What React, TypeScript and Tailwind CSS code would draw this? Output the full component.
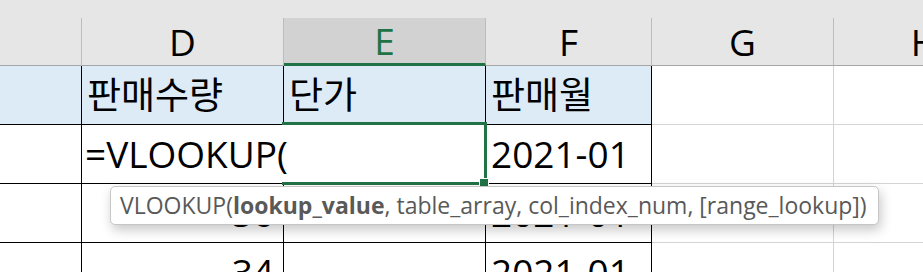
import clsx from "clsx";
import type { ReactNode } from "react";

const font = "font-['Open_Sans','Noto_Sans_CJK_KR',sans-serif]";

const widths = [
  "w-[82px]",
  "w-[202px]",
  "w-[202px]",
  "w-[166px]",
  "w-[182px]",
  "w-[182px]",
];
const letters = ["", "D", "E", "F", "G", "H"];

type CellProps = {
  col: number;
  blue?: boolean;
  right?: boolean;
  noRight?: boolean;
  children?: ReactNode;
};

// body cell: columns C..F carry the table's black borders, G/H only gridlines
const Cell = ({ col, blue, right, noRight, children }: CellProps) => (
  <div
    className={clsx(
      "h-[59px] shrink-0 border-b border-r pt-[10px] leading-[37px] whitespace-nowrap text-[37px] text-black",
      widths[col],
      col >= 4 ? "border-[#d4d4d4]" : "border-black",
      blue && "bg-[#ddebf7]",
      noRight && "border-r-transparent",
      right ? "text-right pr-[9px]" : "pl-[5px]"
    )}
  >
    {children}
  </div>
);

const App = () => {
  return (
    <div
      className={clsx(
        "relative w-[923px] h-[272px] overflow-hidden bg-white",
        font
      )}
    >
      <div className="h-[18px] w-[1100px] bg-[#e6e6e6]" />

      {/* column headers */}
      <div className="flex w-[1100px]">
        {letters.map((l, i) => (
          <div
            key={i}
            className={clsx(
              "h-[48px] shrink-0 flex items-center justify-center border-r border-[#bcbcbc] text-[37px] leading-none",
              widths[i],
              i === 2
                ? "bg-[#d2d2d2] border-b-[3px] border-b-[#217346] text-[#217346]"
                : "bg-[#e6e6e6] border-b border-b-[#a6a6a6] text-black"
            )}
          >
            {l}
          </div>
        ))}
      </div>

      {/* row: headings of the table */}
      <div className="flex w-[1100px]">
        <Cell col={0} blue />
        <Cell col={1} blue>판매수량</Cell>
        <Cell col={2} blue>단가</Cell>
        <Cell col={3} blue>판매월</Cell>
        <Cell col={4} />
        <Cell col={5} />
      </div>

      {/* row: editing formula */}
      <div className="flex w-[1100px]">
        <Cell col={0} />
        <Cell col={1} noRight>
          <span className="-ml-[2px]">=VLOOKUP(</span>
        </Cell>
        <Cell col={2} />
        <Cell col={3}>2021-01</Cell>
        <Cell col={4} />
        <Cell col={5} />
      </div>

      <div className="flex w-[1100px]">
        <Cell col={0} />
        <Cell col={1} right>56</Cell>
        <Cell col={2} />
        <Cell col={3}>2021-01</Cell>
        <Cell col={4} />
        <Cell col={5} />
      </div>

      <div className="flex w-[1100px]">
        <Cell col={0} />
        <Cell col={1} right>34</Cell>
        <Cell col={2} />
        <Cell col={3}>2021-01</Cell>
        <Cell col={4} />
        <Cell col={5} />
      </div>

      {/* active cell outline + fill handle */}
      <div className="absolute left-[282px] top-[122px] w-[205px] h-[63px] border-[3px] border-l-0 border-[#217346]" />
      <div className="absolute left-[479px] top-[178px] w-[10px] h-[9px] bg-[#217346] border border-white" />

      {/* function argument tooltip */}
      <div className="absolute left-[110px] top-[186px] h-[39px] flex items-center rounded-[5px] border border-[#c6c6c6] bg-white pl-[9px] pr-[11px] text-[23px] leading-none text-[#595959] whitespace-nowrap shadow-[2px_5px_12px_rgba(0,0,0,0.22)]">
        VLOOKUP(<span className="font-bold">lookup_value</span>, table_array,
        col_index_num, [range_lookup])
      </div>
    </div>
  );
};

export default App;
